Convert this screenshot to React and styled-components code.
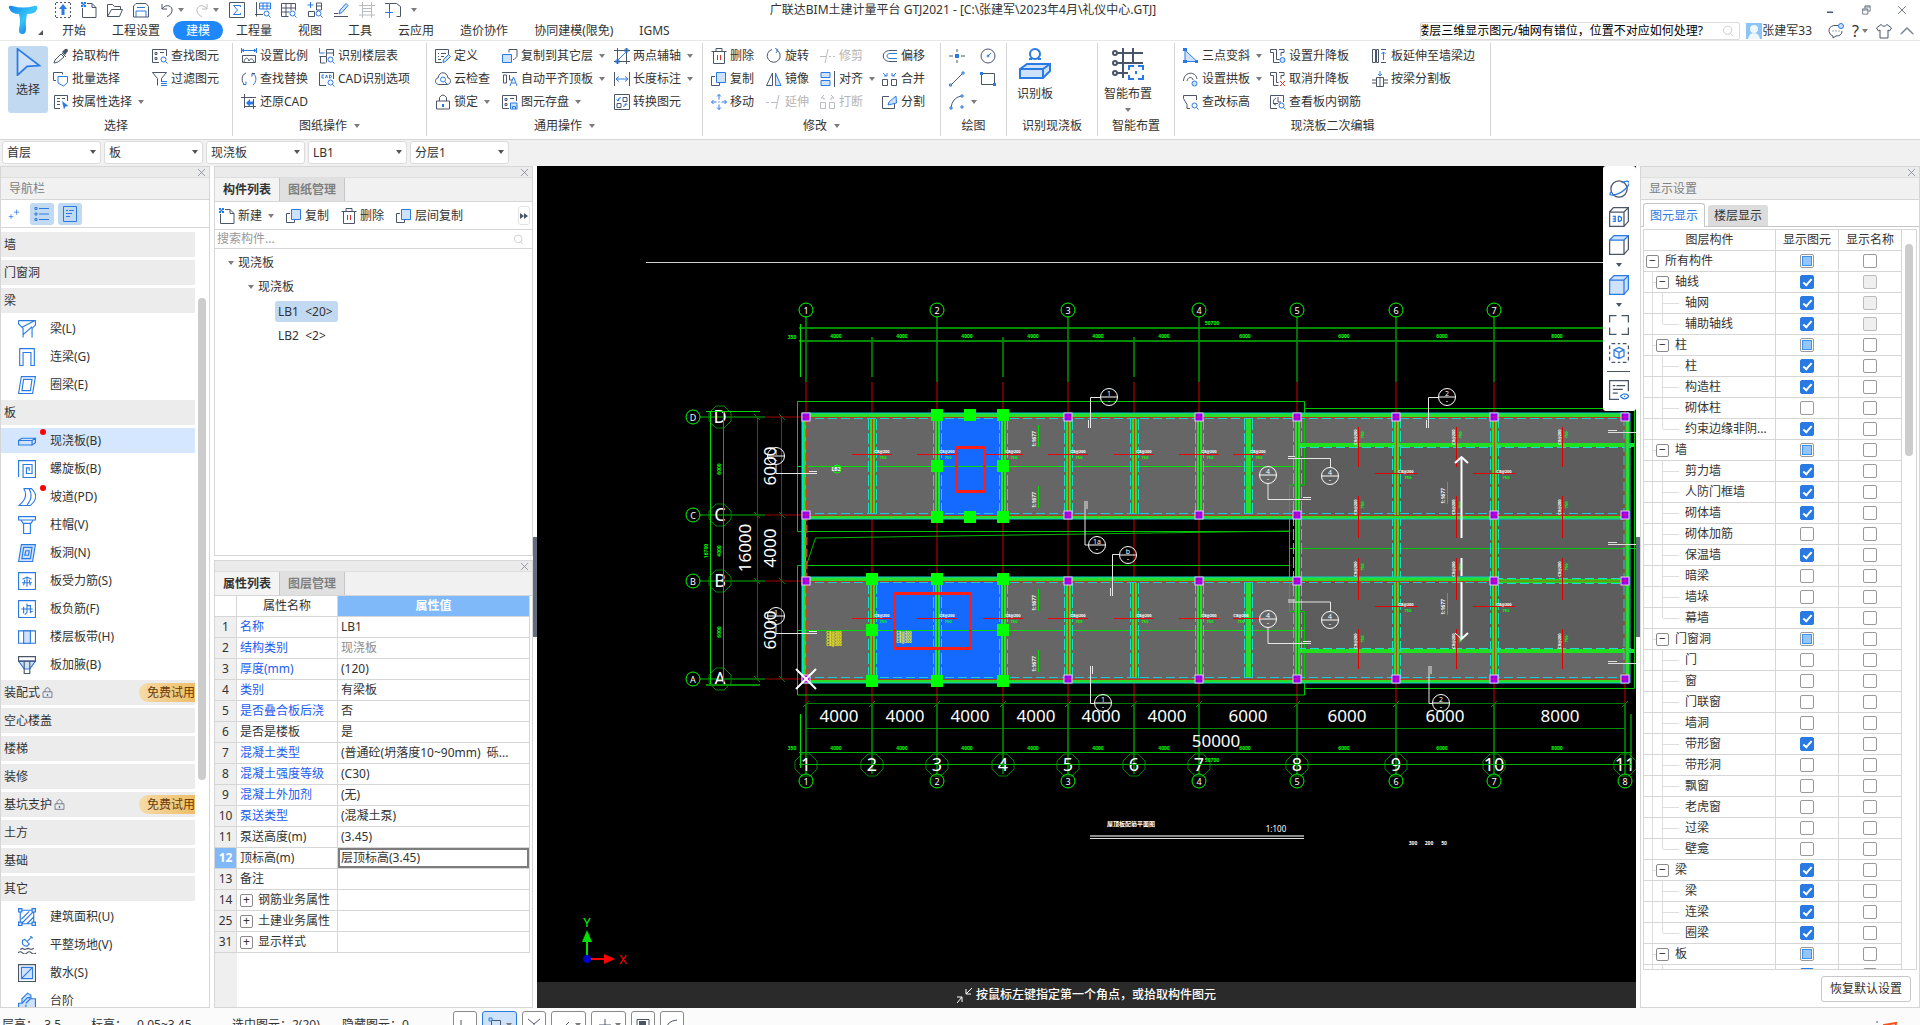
import React from "react";
import styled, { createGlobalStyle, css } from "styled-components";

const theme = {
  text: "#333",
  muted: "#808080",
  line: "#d6d6d6",
  blue: "#2a7ae4",
  pale: "#c2d9f2",
  font: `"Noto Sans", "Noto Sans CJK SC", sans-serif`,
};

const GlobalStyle = createGlobalStyle`
  *, *::before, *::after { box-sizing: border-box; }
  body {
    margin: 0;
    overflow: hidden;
    background: #fff;
    color: ${theme.text};
    font: 12px/16px ${theme.font};
  }
  button, input, select { font: inherit; color: inherit; }
  button {
    padding: 0;
    border: 0;
    background: none;
    white-space: nowrap;
  }
  svg { display: block; flex: none; }
`;

/* ---------- glyphs ---------- */

const tones = {
  k: { stroke: "#4b5568", fill: "none" },
  b: { stroke: theme.blue, fill: "none" },
  g: { stroke: "#b9bcc2", fill: "none" },
  r: { stroke: "#d22f2f", fill: "none" },
  f: { stroke: theme.blue, fill: "#cfe2fb" },
  B: { stroke: "none", fill: theme.blue },
  K: { stroke: "none", fill: "#4b5568" },
};

const LENS = "M9 11.5a2.5 2.5 0 1 0 5 0a2.5 2.5 0 1 0 -5 0M13.5 13.5l2 2";

const glyphs = {
  upload: [["k", "M1 .5h2M5 .5h2M9 .5h2M13 .5h2M1 15.5h2M5 15.5h2M9 15.5h2M13 15.5h2M.5 1v2M.5 5v2M.5 9v2M.5 13v2M15.5 1v2M15.5 5v2M15.5 9v2M15.5 13v2"], ["B", "M8 2l4 5H9.500v6h-3V7H4z"]],
  newFile: [["k", "M6 1.500h5l4 4v10H1.500V6M11 1.500v4h4"], ["B", "M0 0h2v2H0zM3 0h2v2H3zM1.500 1.500h2v2h-2zM0 3h2v2H0zM3 3h2v2H3z"]],
  open: [["k", "M.5 14.500v-12h5l2 2h6v3M.5 14.500l4-7h11l-3 7z"]],
  save: [["k", "M3 1.500h10l2.500 3v10.500h-15v-11z"], ["b", "M4 5.500h8M3 15v-6h10v6"]],
  undo: [["k", "M3 2v5h5M3 7c4-6 11-3 10 2c-.5 3-3 5-5 5.500"]],
  redo: [["g", "M13 2v5H8M13 7c-4-6-11-3-10 2c.5 3 3 5 5 5.500"]],
  sigma: [["k", "M.5 .5h15v15h-15z"], ["b", "M11.500 5V3.500h-7l4 4.500l-4 4.500h7V11"]],
  gridFind: [["k", "M1.500 0v14.500M0 12.500h8"], ["b", "M4.500 1h11v6h-11zM4.500 4h11M8 1v6M12 1v6"], ["b", LENS]],
  tableFind: [["k", "M.5 1.500h14v7M.5 1.500v13h7M.5 6h14M.5 10h8M5 1.500v13M10 1.500v7"], ["b", LENS]],
  floorFind: [["b", "M3.500 0v6M.5 3h6"], ["k", "M9.500 1h5v7h-5zM1.500 9.500h6v5h-6zM9.500 4h5"], ["b", LENS]],
  brush: [["k", "M1 11.500h4M1 14.500h14"], ["f", "M6 12l1-4l6-6.500l2 2l-6 7z"]],
  fence: [["g", "M3.500 0v16M12.500 0v16M0 3.500h16M3 6.500h9M3 9.500h9M0 13h16"]],
  crop: [["k", "M4.500 8V1.500h7l4 3v10h-4M0 1.500h4"], ["b", "M0 10.500h8M4.500 7v9"]],
  dropper: [["k", "M9 5l4 4M1 15l1-3l6-6l3 3l-6 5z"], ["K", "M9 4l3-3q3-1 3 2l-3 4z"]],
  batch: [["k", "M3 9.500H.5v-8h9v2"], ["b", "M5 5.500h9.500v6l-4 3.500l-5.500-3z"]],
  propSel: [["k", "M7 14.500H1.500v-13h13V7M4 4.500h3M4 7.500h3M4 10.500h3M9 4.500h3"], ["B", "M9 7l6.500 5l-3 .5L11 15.500z"]],
  findEl: [["k", "M7 14.500H.5v-13h14V8M3 4.500h2v2H3zM3 9.500h2v2H3zM8 4.500h4"], ["b", LENS]],
  filter: [["k", "M.5 1.500h14l-5 6v3M.5 1.500l5 6v7"], ["b", "M9 10.500h6M9 12.500h6M9 14.500h6"]],
  scale: [["b", "M.5 2.500h15M.5 0v5M15.500 0v5M3 1L1 2.500L3 4M13 1l2 1.500L13 4"], ["k", "M1.500 7.500h13v7h-13zM3 14c1-5 4-5 5-1c1-3 4-3 5 1"]],
  floorTable: [["b", "M.5 0v5h5"], ["k", "M7.500 1.500h7V8M7.500 1.500V8M7.500 5h7M.5 8.500h7v6M1.500 8v7h5"], ["b", LENS]],
  swap: [["k", "M5 2C0 4 0 11 4 14"], ["b", "M2 13.500h3v-3M11 2c5 2 5 9 1 12"], ["k", "M14 2.500h-3v3"]],
  cad: [["k", "M7 14.500H.5v-13h14V8"], ["b", "M5 4H3v3h2M6.500 7l1-3l1 3M10.500 4v3h1l1-1.500L11.500 4z"], ["b", LENS]],
  restore: [["k", "M3.500 0v14M0 3.500h15M12.500 5v10M3 12.500h12"], ["B", "M5 9l4-4v2.500h3v3H9V13z"]],
  define: [["k", "M7 14.500H.5v-13h13V7M3 5.500h1M6 5.500h5M3 8.500h1M6 8.500h3M3 11.500h3"], ["f", "M8 14.500l.5-3l5-5l2 2l-5 5z"]],
  cloud: [["k", "M4 13.500C-1 13 0 7 3 7C4 0 12 0 13 7c3 0 4 6-1 6.500z"], ["b", "M5.500 8.500a2.500 2.500 0 1 0 5 0a2.500 2.500 0 1 0-5 0M10 11l2 2"]],
  lock: [["k", "M4.500 7V3.500q3.500-5 7 0V7M1.500 7h13v8h-13z"], ["B", "M7 10h2v3H7z"]],
  copyTo: [["k", "M7 1.500h8v7l-3 3h-1M7 1.500v3"], ["f", "M.5 6.500h9v8h-9z"]],
  align2: [["k", "M0 1.500h15M1.500 4v8h3V4zM7.500 4v5h3"], ["b", "M8 15l3.500-9L15 15M9.500 12h4"]],
  elSave: [["k", "M7 14.500H.5v-13h14V7M3 4.500h2v2H3zM3 9.500h2v2H3zM8 4.500h4"], ["f", "M8.500 9h6.500v6H8.500zM10.500 15v-2.500h3V15"]],
  twoPt: [["k", "M3.500 0v16M12.500 0v16M0 2.500h16M0 13.500h16"], ["b", "M3 13L13 3M2 12h3v3H2zM11 1h3v3h-3z"]],
  length: [["k", "M.5 1v14M15.500 1v14"], ["b", "M2 8h12M5 5.500L2 8l3 2.500M11 5.500L14 8l-3 2.500"]],
  convert: [["k", "M.5 .5h15v15h-15zM9 3.500h4v4H9zM3 9.500h4v4H3z"], ["b", "M7 3.500Q4 3.500 4 7M2.500 5.500L4 7l1.500-1.500M9 12.500q3 0 3-3M10.500 11L12 9.500l1.500 1.500"]],
  trash: [["k", "M.5 3.500h15M5 3V.5h6V3M2.500 4v11.500h11V4"], ["r", "M6.500 7v5M9.500 7v5"]],
  copy: [["k", "M4 5.500H.5v9h8V12"], ["f", "M5.500 1.500h9v10h-9z"]],
  move: [["b", "M8 .5v5M8 10.500v5M.5 8h5M10.500 8h5M6 2.500l2-2l2 2M6 13.500l2 2l2-2M2.500 6l-2 2l2 2M13.500 6l2 2l-2 2"], ["K", "M7.500 7.500h1v1h-1z"]],
  rotate: [["k", "M6 1.500A6.500 6.500 0 1 0 10 1.700"], ["b", "M9 0l3 2l-2 3"]],
  mirror: [["k", "M6.500 2v12.500H.5z"], ["f", "M9.500 2v12.500h5.500z"]],
  trim: [["g", "M0 8.500h6M9 8.500h2M13 8.500h2M8 1L5 15"]],
  extend: [["g", "M0 8.500h3M5 8.500h3M13 1l-3 14M8 8.500h4"]],
  alignR: [["f", "M1 1.500h9v5H1zM1 9.500h9v5H1z"], ["k", "M14.500 0v16"]],
  breakEl: [["g", "M.5 8.500h5v6h-5zM9.500 8.500h5v6h-5zM4 6V4H1M4 1L1 4M11 6V4h3M11 1l3 3"]],
  offset: [["k", "M15 2.500H8C-1 2.500-1 13.500 8 13.500h7"], ["b", "M15 5.500H8C4 5.500 4 10.500 8 10.500h7"]],
  merge: [["k", "M.5 8.500h5v6h-5zM9.500 8.500h5v6h-5z"], ["b", "M1 2l3 3M5 2v3H2M14 2l-3 3M10 2v3h3"]],
  split: [["k", "M7 2.500H.5v12h12V10"], ["f", "M6 11l1-3l7-6l.5 7z"]],
  point: [["k", "M0 8h4M12 8h4M8 1v3M8 12v3"], ["B", "M6 6h4v4H6z"]],
  circle: [["k", "M1 8a7 7 0 1 0 14 0a7 7 0 1 0-14 0"], ["b", "M8 8l3-3M7 8a1 1 0 1 0 2 0a1 1 0 1 0-2 0"]],
  lineEl: [["k", "M2 14L14 2"], ["f", "M.5 13h2v2h-2zM13 1h2v2h-2z"]],
  rect: [["k", "M1.500 2.500h13v11h-13z"], ["B", "M0 1h3v3H0zM13 12h3v3h-3z"]],
  arc: [["k", "M2 14Q3 4 12 2"], ["f", "M1 13h2v2H1zM12 1h2v2h-2zM12 12h2v2h-2z"]],
  slope: [["f", "M2 2v11.500h12z"], ["B", "M0 0h4v3H0zM0 12h4v3H0zM12 12h3v3h-3z"]],
  arch: [["k", "M.5 10C1 0 13 0 14 8M4 10c1-5 6-4 6-1"], ["f", "M9 12.500a2.500 2.500 0 1 0 5 0a2.500 2.500 0 1 0-5 0"]],
  level: [["k", "M7 14.500H4v-4l-3.500-6v-3h13V6"], ["b", LENS]],
  drop: [["k", "M.5 1.500h6v10h3M.5 1.500v3h3v10h6M9 1.500h5v3h-3V8"], ["f", "M10 12a2.500 2.500 0 1 0 5 0a2.500 2.500 0 1 0-5 0"]],
  dropX: [["k", "M.5 1.500h6v10h2M.5 1.500v3h3v10h5M9 1.500h5v3h-3V8"], ["r", "M10 10l5 5M15 10l-5 5"]],
  rebar: [["k", "M7 14.500H.5v-13h13V8M3 9.500h5M6 4c-4 2-3 7 0 7M8 3v5h3"], ["b", LENS]],
  extendTo: [["k", "M.5 1.500h3v13h-3zM4.500 1.500h2v13h-2zM9 1.500h5M9 14.500h5"], ["b", "M11.500 12V4M9.500 6l2-2l2 2"]],
  splitBy: [["k", "M4.500 6.500h7v9h-7zM0 9h4M0 12h4M12 9h4M12 12h4M8 7v8"], ["b", "M8 0v5M6 3l2 2l2-2"]],
  chat: [["k", "M10 2.500H6q-5.500 1-5 6q1 4 4 4.500L5 15l3-2q6 0 6-5M4.500 8h1M7.500 8h1M10.500 8h1"], ["f", "M10.500 3a2 2 0 1 0 5 0a2 2 0 1 0-5 0"]],
  shirt: [["k", "M5 1.500L.5 5l2 3l1.500-1v8h8V7l1.500 1l2-3L11 1.500Q8 5 5 1.500z"]],
  search: [["g", "M2 7a5.500 5.500 0 1 0 11 0a5.500 5.500 0 1 0-11 0M11 11l3.500 4"]],
  collapse: [["k", "M1 12l7-7l7 7M1 11l7-7l7 7"]],
  close: [["k", "M3 3l10 10M13 3L3 13"]],
  closeDim: [["k", "M3 3l10 10M13 3L3 13"]],
  restoreWin: [["k", "M6.500 6V2.500h7v7H11M3.500 6.500h7v7h-7zM3.500 8h7M6.500 4h7"]],
  minimize: [["K", "M4 10h8v2H4z"]],
  sparkle: [["b", "M8 5.500h7M11.500 2v7M1 11.500h6M4 8.500v6"]],
  list: [["b", "M5 2.500h10M5 8h10M5 13.500h10M1 1.500h2v2H1zM1 7h2v2H1zM1 12.500h2v2H1z"]],
  card: [["b", "M1.500 .5h13v15h-13zM4 4.500h2M7 4.500h5M4 7.500h6M4 10.500h4"]],
  nBeam: [["b", "M.5 .5h15v4l-3 3v8M.5 .5v3l4 4v8M.5 3.500l3 3L15 .5M4.500 13l8-7"]],
  nLink: [["b", "M1.500 15.500V.5h13v15h-3V4h-7v11.500z"]],
  nRing: [["b", "M3 .5h12.500l-2.500 15H.5zM5 3h7.500L11 13H3.500z"]],
  nSlab: [["f", "M.5 7.500l3-2h12l-3 2zM.5 7.500h12v4H.5zM12.500 7.500l3-2v4l-3 2z"]],
  nSpiral: [["b", "M.5 15V.5h15v15h-11V4h8v8H7.500V7H10v2.500"]],
  nRamp: [["b", "M5 .5h7Q20 8 11 15.500H1Q10 8 5 .5M10 1q4 7-2 14"]],
  nCap: [["b", "M.5 .5h15v3h-15zM2.500 3.500l2 3h7l2-3M5 6.500v9h6v-9"]],
  nHole: [["f", "M3 .5h12.500l-2.500 15H.5z"], ["b", "M5 3h7.500L11 13H3.500zM7 6h3l-.7 4H6z"]],
  nBar: [["b", "M.5 .5h15v15H.5zM4 6.500l4-2l4 2M3.500 9.500h9M8 4v9M5 12l1-5M11 12l-1-5"]],
  nBar2: [["b", "M.5 .5h15v15H.5zM3 8h10M5 6v6M8 3v8l-2 2M8 5h3v6l2-1"]],
  nStrip: [["b", "M.5 2.500h15v11H.5z"], ["f", "M5 2.500h6v11H5z"]],
  nHaunch: [["f", "M.5 4.500h15l-5 7h-5z"], ["k", "M.5 .5h15v4H.5zM5.500 4.500v11h5v-11"]],
  nArea: [["b", "M2 2h12v12H2zM3 10l7-7M3 14L14 3M8 14l6-6"], ["f", "M.5 .5h3v3h-3zM12.500 .5h3v3h-3zM.5 12.500h3v3h-3zM12.500 12.500h3v3h-3z"]],
  nGround: [["b", "M4 4q-1 5 4 5l2-2l-4-4zM8 5l4-4M11 0l2 2"], ["k", "M0 15q2-2 4 0t4 0t4 0t4 0M2 12l2-1l2 1l3-1l3 1l2-1"]],
  nApron: [["k", "M.5 .5h15v15H.5z"], ["f", "M3 3h10v10H3zM3 13L13 3"]],
  nStep: [["f", "M.5 15v-5h3V6l5-5l3 2v3h4v9z"], ["b", "M3.500 10l5-5h3M7 10l4-4M7 15v-4"]],
  orbit: [["k", "M1.500 8a6.500 6.500 0 1 0 13 0a6.500 6.500 0 1 0-13 0"], ["b", "M2 10c-5 5 6 3 11-2S17 0 10 3"]],
  cube3d: [["k", "M.5 4l3-3.500h12v11l-3.500 4H.5zM.5 4H12v11.500M12 4l3.500-3.500"], ["b", "M3 7.500h2v4H3M3 9.500h2M7.500 7.500v4h1l1.500-1v-2l-1.500-1z"]],
  cubeTop: [["k", "M.5 4v11.500H12V4M12 15.500l3.500-4V.5"], ["f", "M.5 4L4 .5h11.500L12 4z"]],
  cube: [["f", "M.5 4L4 .5h11.500v11l-3.500 4H.5z"], ["b", "M.5 4H12v11.500M12 4L15.500 .5"]],
  fit: [["k", "M.5 6V.5H6M10 .5h5.500V6M15.500 10v5.500H10M6 15.500H.5V10"]],
  isolate: [["k", "M2 .5h3M7 .5h2M11 .5h3M2 15.500h3M7 15.500h2M11 15.500h3M.5 2v3M.5 7v2M.5 11v3M15.500 2v3M15.500 7v2M15.500 11v3"], ["b", "M8 3.500l4 2v5l-4 2l-4-2v-5zM4 5.500l4 2l4-2M8 7.500v5"]],
  listEye: [["k", "M8 15.500H.5V.5h15V9M3 4.500h2M6 4.500h7M3 7.500h8M3 10.500h4"], ["b", "M9 13q3.500-4 7 0q-3.500 4-7 0M12 13h1"]],
  bigSlab: [["f", "M.5 10.500L4 8h11.500v3.500L12 15H.5zM.5 10.500H12v4.500M12 10.500L15.500 8"], ["b", "M5.500 3a2.500 2.500 0 1 0 5 0a2.500 2.500 0 1 0-5 0M9.500 5.500h1.500M6.500 5.500H5"]],
  bigGrid: [["k", "M2 2.500h13.500M2 7.500h13.500M2 12.500h6M5.500 0v15M10.500 0v8M.5 2.500a1 1 0 1 0 2 0a1 1 0 1 0-2 0M.5 7.500a1 1 0 1 0 2 0a1 1 0 1 0-2 0M.5 12.500a1 1 0 1 0 2 0a1 1 0 1 0-2 0"], ["b", "M8.500 11V9H11M13 9h2.500v2M15.500 13.500v2H13M11 15.500H8.500v-2M12 11.500v1.500"]],
  cursor: [["f", "M2 .5l12.500 9.500l-7 .5L2 15.500z"]],
  corner: [["k", "M4 3v10h10"]],
  sRect: [["k", "M3.500 3.500h9v10h-9z"], ["f", "M1 1h3v3H1z"]],
  sX: [["k", "M2 2l6 5l6-5M8 7v8"]],
  sLine: [["k", "M3 14l9-9"]],
  sPlus: [["k", "M8 2v12M2 8h12"]],
  sFill: [["k", "M2 2.500h12v12H2z"], ["K", "M4 4h7v8H4z"]],
  sArc: [["k", "M2 14Q2 4 13 3M2 13h3v3"]],
};

const Glyph = ({ name, size = 16 }) => (
  <svg width={size} height={size} viewBox="0 0 16 16" aria-hidden="true">
    {glyphs[name].map(([tone, d], i) => (
      <path key={i} d={d} strokeWidth="1" {...tones[tone]} />
    ))}
  </svg>
);

const Caret = styled.i`
  flex: none;
  width: 0;
  height: 0;
  border: 3px solid transparent;
  border-top: 4px solid ${(p) => p.$color || "#7c7c7c"};
  border-bottom: 0;
`;

/* ---------- header ---------- */

const Page = styled.div`
  height: 100vh;
  display: flex;
  flex-direction: column;
`;

const Header = styled.header`
  display: flex;
  border-bottom: 1px solid #e8e8e8;
  height: 41px;
`;

const Logo = styled.div`
  width: 49px;
  padding: 4px 0 5px 8px;
  display: flex;
  align-items: flex-end;
`;

const HeaderRows = styled.div`
  flex: 1;
  min-width: 0;
`;

const TitleRow = styled.div`
  display: flex;
  align-items: center;
  height: 20px;
`;

const QuickTools = styled.div`
  flex: 1 1 0;
  display: flex;
  align-items: center;
  gap: 10px;
  padding-left: 6px;
`;

const IconButton = styled.button`
  display: flex;
  align-items: center;
  gap: 3px;
`;

const WindowButtons = styled.div`
  flex: 1 1 49px;
  display: flex;
  justify-content: flex-end;
  gap: 24px;
  padding-right: 12px;
`;

const TabRow = styled.nav`
  display: flex;
  align-items: center;
  height: 21px;
`;

const RibbonTab = styled.button`
  height: 19px;
  padding: 0 13px;
  border-radius: 10px;
  ${(p) =>
    p.$active &&
    css`
      background: #1e88fb;
      color: #fff;
    `}
`;

const Account = styled.div`
  margin-left: auto;
  display: flex;
  align-items: center;
  padding-right: 6px;
`;

const HelpSearch = styled.label`
  display: flex;
  align-items: center;
  width: 320px;
  height: 18px;
  padding-right: 5px;
  border: 1px solid #dcdcdc;
  border-radius: 2px;
  margin-right: 6px;
  color: #000;
  input {
    flex: 1;
    min-width: 0;
    padding: 0;
    border: 0;
    outline: 0;
    background: none;
    text-indent: -4px;
  }
`;

const AccountTools = styled.div`
  display: flex;
  align-items: center;
  gap: 8px;
  margin-left: 16px;
`;

const HelpButton = styled(IconButton)`
  font-size: 16px;
`;

/* ---------- ribbon ---------- */

const Ribbon = styled.section`
  display: flex;
  height: 99px;
  border-bottom: 1px solid ${theme.line};
`;

const Group = styled.div`
  display: flex;
  flex-direction: column;
  margin: 2px 0 3px;
  padding: 1px 0 0 ${(p) => (p.$w ? 0 : 8)}px;
  width: ${(p) => (p.$w ? `${p.$w}px` : "auto")};
  border-right: 1px solid ${theme.line};
`;

const GroupTools = styled.div`
  display: flex;
  height: 73px;
  padding-left: ${(p) => p.$lead || 0}px;
`;

const GroupLabel = styled.div`
  display: flex;
  align-items: center;
  justify-content: center;
  gap: 7px;
  margin-left: ${(p) => (p.$flush ? 0 : -8)}px;
  padding-top: 1px;
`;

const ToolColumn = styled.div`
  display: flex;
  flex-direction: column;
  width: ${(p) => p.$w}px;
`;

const Tool = styled.button`
  display: flex;
  align-items: center;
  gap: 3px;
  height: 23px;
  color: ${(p) => (p.$off ? "#b5b5b5" : "inherit")};
  ${Caret} {
    margin-left: 3px;
  }
`;

const BigTool = styled.button`
  display: flex;
  flex-direction: column;
  align-items: center;
  gap: 6px;
  width: ${(p) => p.$w || 52}px;
  height: 67px;
  margin: 2px 5px 0 0;
  padding-top: 2px;
  border-radius: 3px;
  background: ${(p) => (p.$active ? theme.pale : "none")};
`;

const ribbonGroups = [
  {
    label: "选择",
    big: { icon: "cursor", label: "选择", w: 40, size: 28, active: true },
    cols: [
      [99, ["dropper", "拾取构件"], ["batch", "批量选择"], ["propSel", "按属性选择", 1]],
      [80, ["findEl", "查找图元"], ["filter", "过滤图元"]],
    ],
  },
  {
    label: "图纸操作",
    more: true,
    cols: [
      [78, ["scale", "设置比例"], ["swap", "查找替换"], ["restore", "还原CAD"]],
      [107, ["floorTable", "识别楼层表"], ["cad", "CAD识别选项"]],
    ],
  },
  {
    label: "通用操作",
    more: true,
    cols: [
      [67, ["define", "定义"], ["cloud", "云检查"], ["lock", "锁定", 1]],
      [112, ["copyTo", "复制到其它层", 1], ["align2", "自动平齐顶板", 1], ["elSave", "图元存盘", 1]],
      [88, ["twoPt", "两点辅轴", 1], ["length", "长度标注", 1], ["convert", "转换图元"]],
    ],
  },
  {
    label: "修改",
    more: true,
    cols: [
      [55, ["trash", "删除"], ["copy", "复制"], ["move", "移动"]],
      [54, ["rotate", "旋转"], ["mirror", "镜像"], ["extend", "延伸", 0, 1]],
      [62, ["trim", "修剪", 0, 1], ["alignR", "对齐", 1], ["breakEl", "打断", 0, 1]],
      [58, ["offset", "偏移"], ["merge", "合并"], ["split", "分割"]],
    ],
  },
  {
    label: "绘图",
    cols: [
      [31, ["point", ""], ["lineEl", ""], ["arc", "", 1]],
      [26, ["circle", ""], ["rect", ""]],
    ],
  },
  { label: "识别现浇板", w: 91, lead: 2, big: { icon: "bigSlab", label: "识别板", size: 32 } },
  { label: "智能布置", w: 77, lead: 4, big: { icon: "bigGrid", label: "智能布置", size: 32, more: true } },
  {
    label: "现浇板二次编辑",
    cols: [
      [87, ["slope", "三点变斜", 1], ["arch", "设置拱板", 1], ["level", "查改标高"]],
      [102, ["drop", "设置升降板"], ["dropX", "取消升降板"], ["rebar", "查看板内钢筋"]],
      [118, ["extendTo", "板延伸至墙梁边"], ["splitBy", "按梁分割板"]],
    ],
  },
];

const RibbonGroup = ({ group }) => (
  <Group $w={group.w}>
    <GroupTools $lead={group.lead}>
      {group.big && (
        <BigTool $w={group.big.w} $active={group.big.active}>
          <Glyph name={group.big.icon} size={group.big.size} />
          <span>{group.big.label}</span>
          {group.big.more && <Caret />}
        </BigTool>
      )}
      {(group.cols || []).map(([w, ...tools], i) => (
        <ToolColumn key={i} $w={w}>
          {tools.map(([icon, label, more, off]) => (
            <Tool key={icon} $off={off} aria-label={label || icon}>
              <Glyph name={icon} />
              {label}
              {more ? <Caret /> : null}
            </Tool>
          ))}
        </ToolColumn>
      ))}
    </GroupTools>
    <GroupLabel $flush={!!group.w}>
      {group.label}
      {group.more && <Caret />}
    </GroupLabel>
  </Group>
);

/* ---------- option bar ---------- */

const OptionBar = styled.section`
  display: flex;
  gap: 3px;
  height: 26px;
  padding: 1px 0 0 2px;
  background: #f1f1f1;
`;

const PickBox = styled.label`
  position: relative;
  width: 99px;
  height: 23px;
  select {
    width: 100%;
    height: 100%;
    padding: 0 16px 0 4px;
    appearance: none;
    border: 1px solid #dcdcdc;
    border-radius: 3px;
    background: #fff;
  }
  ${Caret} {
    position: absolute;
    right: 5px;
    top: 9px;
  }
`;

/* ---------- panels ---------- */

const Workspace = styled.main`
  flex: 1;
  min-height: 0;
  display: flex;
`;

const Panel = styled.section`
  display: flex;
  flex-direction: column;
  min-height: 0;
  border: 1px solid ${theme.line};
  flex: ${(p) => p.$flex || "none"};
  overflow: hidden;
`;

const PanelStrip = styled.div`
  flex: none;
  display: flex;
  justify-content: flex-end;
  align-items: center;
  height: 11px;
  padding-right: 2px;
  background: #e7e7e7;
  border-bottom: 1px solid ${theme.line};
  opacity: 0.8;
`;

const PanelTitle = styled.h2`
  flex: none;
  margin: 0;
  height: 22px;
  padding-left: 8px;
  font: inherit;
  line-height: 22px;
  color: ${theme.muted};
  background: #f1f1f1;
  border-bottom: 1px solid ${theme.line};
`;

const NavColumn = styled.div`
  display: flex;
  width: 210px;
  margin-right: 4px;
`;

const NavTools = styled.div`
  flex: none;
  display: flex;
  align-items: center;
  gap: 4px;
  height: 28px;
  padding-left: 1px;
  border-bottom: 1px solid ${theme.line};
`;

const NavTool = styled.button`
  width: 24px;
  height: 22px;
  display: flex;
  align-items: center;
  justify-content: center;
  border-radius: 3px;
  background: ${(p) => (p.$on ? theme.pale : "none")};
`;

const NavBody = styled.div`
  flex: 1;
  min-height: 0;
  display: flex;
  overflow: hidden;
`;

const NavList = styled.ul`
  flex: 1;
  margin: 0;
  padding: 4px 0 0;
  list-style: none;
`;

const NavHead = styled.li`
  display: flex;
  align-items: center;
  gap: 2px;
  height: 25px;
  margin-bottom: 3px;
  padding-left: 3px;
  background: #ececec;
`;

const NavItem = styled.li`
  display: flex;
  align-items: center;
  gap: 14px;
  height: 25px;
  margin-bottom: 3px;
  padding-left: 17px;
  background: ${(p) => (p.$on ? "#d4e7fe" : "none")};
`;

const NavIcon = styled.span`
  position: relative;
  &::after {
    content: "";
    position: absolute;
    display: ${(p) => (p.$dot ? "block" : "none")};
    right: -10px;
    top: -3px;
    width: 6px;
    height: 6px;
    border-radius: 50%;
    background: #f00;
  }
`;

const Trial = styled.span`
  margin-left: auto;
  height: 19px;
  padding: 2px 0 0 8px;
  border-radius: 10px 0 0 10px;
  background: linear-gradient(90deg, #f6dba7, #edbe69);
  color: #6b3a06;
  line-height: 15px;
`;

const ScrollTrack = styled.div`
  flex: none;
  width: ${(p) => p.$w}px;
  padding: ${(p) => p.$top}px 3px 0;
  &::before {
    content: "";
    display: block;
    height: ${(p) => p.$len}px;
    border-radius: 4px;
    background: #ccc;
  }
`;

const MiddleColumn = styled.div`
  display: flex;
  flex-direction: column;
  gap: 4px;
  width: 319px;
`;

const PanelTabs = styled.div`
  flex: none;
  display: flex;
  height: 24px;
  background: #f1f1f1;
  border-bottom: 1px solid ${theme.line};
`;

const PanelTab = styled.button`
  width: 65px;
  font-weight: bold;
  color: ${(p) => (p.$on ? theme.text : theme.muted)};
  background: ${(p) => (p.$on ? "#f4f4f4" : "#e0e0e0")};
  border-right: 1px solid #c4c6ca;
`;

const ListTools = styled.div`
  flex: none;
  display: flex;
  align-items: center;
  gap: 12px;
  height: 28px;
  padding: 0 2px 0 4px;
  border-bottom: 1px solid ${theme.line};
`;

const ListTool = styled.button`
  display: flex;
  align-items: center;
  gap: 3px;
  ${Caret} {
    margin-left: 3px;
  }
`;

const MoreButton = styled.button`
  display: flex;
  align-items: center;
  margin-left: auto;
  height: 19px;
  padding: 0 1px;
  border: 1px solid #e2e2e2;
  border-radius: 3px;
`;

const ListSearch = styled.label`
  flex: none;
  display: flex;
  align-items: center;
  height: 19px;
  padding: 0 8px 0 2px;
  border-bottom: 1px solid ${theme.line};
  input {
    flex: 1;
    padding: 0;
    border: 0;
    outline: 0;
  }
  input::placeholder {
    color: #999;
  }
`;

const Tree = styled.ul`
  margin: 0;
  padding: 2px 0 0;
  list-style: none;
`;

const TreeRow = styled.li`
  display: flex;
  align-items: center;
  gap: 4px;
  height: 24px;
  padding-left: ${(p) => p.$indent}px;
  white-space: pre;
`;

const TreePill = styled.span`
  padding: 3px 5px 2px 3px;
  border-radius: 3px;
  background: ${(p) => (p.$on ? theme.pale : "none")};
`;

const PropBody = styled.div`
  flex: 1;
  padding-right: 2px;
  background: linear-gradient(90deg, #efefef 22px, #fff 22px);
`;

const PropTable = styled.table`
  width: 100%;
  table-layout: fixed;
  border-spacing: 0;
  background: #fff;
  th,
  td {
    height: 21px;
    padding: 0 3px;
    font-weight: normal;
    border-right: 1px solid ${theme.line};
    border-bottom: 1px solid ${theme.line};
    white-space: pre;
  }
  tbody th {
    padding: 0;
    text-align: center;
    background: #efefef;
  }
  tbody th.active {
    background: #80b9f9;
    color: #fff;
    font-weight: bold;
  }
  thead th:last-child {
    background: #80b9f9;
    color: #fff;
    font-weight: bold;
  }
  td.link {
    color: #1c5cf0;
  }
  td.dim {
    color: #8c8c8c;
  }
  td.edit {
    box-shadow: inset 0 0 0 2px #7d7d7d;
  }
`;

const Expander = styled.button`
  flex: none;
  display: inline-flex;
  align-items: center;
  justify-content: center;
  width: 13px;
  height: 13px;
  margin-right: ${(p) => (p.$wide ? 5 : 0)}px;
  border: 1px solid #8a8a8a;
  border-radius: 2px;
  line-height: 10px;
  background: #fff;
`;

const Splitter = styled.div`
  flex: none;
  display: flex;
  align-items: center;
  width: 4px;
  &::before {
    content: "";
    width: 4px;
    height: 100px;
    background: #626c7c;
  }
`;

/* ---------- canvas ---------- */

const Canvas = styled.section`
  position: relative;
  flex: 1;
  min-width: 0;
  background: #000;
  overflow: hidden;
`;

const Prompt = styled.div`
  position: absolute;
  inset: auto 0 0 0;
  height: 26px;
  display: flex;
  align-items: center;
  justify-content: center;
  gap: 4px;
  background: #2a2a2a;
  color: #fff;
  font-weight: 500;
`;

const ViewTools = styled.div`
  position: absolute;
  top: 0;
  right: 0;
  display: flex;
  flex-direction: column;
  align-items: center;
  gap: 8px;
  width: 33px;
  padding: 13px 2px 11px 0;
  background: #fff;
  border-radius: 3px;
  hr {
    width: 23px;
    margin: 0;
    border: 0;
    border-top: 1px solid #4b5568;
  }
`;

const X = [806, 872, 937, 1003, 1068, 1134, 1199, 1297, 1396, 1494, 1625];
const Y = { D: 417, C: 515, B: 581, A: 679 };
const spans = [4000, 4000, 4000, 4000, 4000, 4000, 6000, 6000, 6000, 8000];
const numbered = [0, 2, 4, 6, 7, 8, 9, 10];
const G = "#00e000";
const LIME = "#00ff00";

const L = ({ p, c = G, w = 1, dash }) => (
  <polyline points={p} fill="none" stroke={c} strokeWidth={w} strokeDasharray={dash} />
);

const T = ({ x, y, s = 5, c = LIME, r = 0, children, ...rest }) => (
  <text
    x={x}
    y={y}
    fontSize={s}
    fill={c}
    fontWeight={s < 7 ? "bold" : "normal"}
    textAnchor="middle"
    dominantBaseline="central"
    transform={r ? `rotate(${r} ${x} ${y})` : undefined}
    fontFamily={theme.font}
    {...rest}
  >
    {children}
  </text>
);

const Bubble = ({ x, y, n }) => (
  <g>
    <circle cx={x} cy={y} r="7" fill="none" stroke={LIME} />
    <T x={x} y={y} s={9} c="#fff">{n}</T>
  </g>
);

const BigBubble = ({ x, y, n }) => (
  <g>
    <path
      d={`M${x - 4} ${y - 11}h8l7 7v8l-7 7h-8l-7-7v-8z`}
      fill="none"
      stroke="#008000"
    />
    <T x={x} y={y - 1} s={18} c="#fff">{n}</T>
  </g>
);

/* outer beam: band lies off the axis on one side */
const EdgeBeam = ({ x1, x2, y, side }) => (
  <g>
    <L p={`${x1},${y + side * 2} ${x2},${y + side * 2}`} c="#2bdd2b" w={4} />
    <L p={`${x1},${y + side * 4} ${x2},${y + side * 4}`} c="#00d0d0" />
    <L p={`${x1},${y + 0.5} ${x2},${y + 0.5}`} c="#b0401c" />
    <L p={`${x1},${y - side * 1.5} ${x2},${y - side * 1.5}`} c="#20c8d8" dash="9 4" />
  </g>
);

const HBeam = ({ x1, x2, y, side, both }) => (
  <g>
    <L p={`${x1},${y} ${x2},${y}`} c="#1fe01f" w={4} />
    <L p={`${x1},${y + side * 2.5} ${x2},${y + side * 2.5}`} c="#20d8d8" dash="9 4" />
    {both && <L p={`${x1},${y - side * 2.5} ${x2},${y - side * 2.5}`} c="#20d8d8" dash="9 4" />}
    {both && <L p={`${x1},${y} ${x2},${y}`} c="#a85a10" />}
  </g>
);

const VBeam = ({ x, y1, y2, axis = true }) => (
  <g>
    <L p={`${x + 0.5},${y1} ${x + 0.5},${y2}`} c="#2bdd2b" w={5} />
    {axis && <L p={`${x + 0.5},${y1} ${x + 0.5},${y2}`} c="#b84a10" />}
    <L p={`${x - 3.5},${y1} ${x - 3.5},${y2}`} c="#20d8d8" dash="11 3" />
    <L p={`${x + 4.5},${y1} ${x + 4.5},${y2}`} c="#20d8d8" dash="11 3" />
  </g>
);

const Mark = ({ x, y, n, p, tail }) => (
  <g>
    <circle cx={x} cy={y} r="8.500" fill="none" stroke="#fff" />
    <L p={`${x - 8},${y} ${x + 8},${y}`} c="#fff" />
    <T x={x} y={y - 4} s={7} c="#fff">{n}</T>
    <T x={x} y={y + 4} s={6} c="#fff">-</T>
    <L p={p} c="#e6e6e6" />
    {tail && <L p={tail} c="#e6e6e6" />}
  </g>
);

const Column = ({ x, y }) => (
  <g>
    <rect x={x - 4} y={y - 4} width="8" height="8" fill="#8a00ff" stroke="#f0c8f0" />
    <L p={`${x - 3},${y} ${x + 3},${y}`} c="#e000a0" />
    <L p={`${x},${y - 3} ${x},${y + 3}`} c="#e000a0" />
  </g>
);

const columns = [
  ...[0, 4, 6, 7, 8, 9, 10].map((i) => [X[i], Y.D]),
  ...[0, 4, 6, 7, 9, 10].map((i) => [X[i], Y.C]),
  ...[0, 4, 6, 7, 9, 10].map((i) => [X[i], Y.B]),
  ...[0, 4, 6, 7, 8, 9, 10].map((i) => [X[i], Y.A]),
];

const grips = [
  [937, 415], [970, 415], [1003, 415], [937, 466], [1003, 466], [937, 517], [970, 517], [1003, 517],
  [872, 579], [937, 579], [1003, 579], [872, 630], [1003, 630], [872, 681], [937, 681], [1003, 681],
];

const Plan = () => (
  <svg width="100%" height="100%" viewBox="537 166 1099 842" preserveAspectRatio="xMinYMin slice">
    <L p="646,262.500 1636,262.500" c="#d0d0d0" />

    {/* slabs */}
    <rect x="802" y="413" width="495" height="106" fill="#666" />
    <rect x="802" y="577" width="495" height="106" fill="#666" />
    <rect x="1297" y="413" width="331" height="270" fill="#5d5d5d" />
    <rect x="1297" y="413" width="331" height="32" fill="#676767" />
    <rect x="1297" y="650" width="331" height="32" fill="#676767" />
    <rect x="937" y="417" width="66" height="98" fill="#146aff" />
    <rect x="872" y="581" width="131" height="98" fill="#146aff" />

    {/* axes */}
    {X.map((x, i) => (
      <g key={x}>
        <L p={`${x},382 ${x},413`} c="#d00000" />
        {i < 7 && <L p={`${x},519 ${x},577`} c="#d00000" />}
        <L p={`${x},683 ${x},704`} c="#d00000" />
        <L p={`${x},704 ${x},774`} />
        <BigBubble x={x} y={765} n={i + 1} />
        {numbered.includes(i) ? (
          <L p={`${x},317 ${x},382`} />
        ) : (
          <L p={`${x},337 ${x},377`} />
        )}
        <L p={`${x - 3},707 ${x + 3},701`} c="#008000" />
      </g>
    ))}
    {numbered.map((i, k) => (
      <g key={i}>
        <Bubble x={X[i]} y={310} n={k + 1} />
        <Bubble x={X[i]} y={781} n={k + 1} />
      </g>
    ))}
    <L p="799,328 1636,328" c="#008c00" w={2} />
    <L p="799,341 1636,341" c="#008c00" w={2} />
    <L p="800.500,324 800.500,377" />
    <L p="800.500,714 800.500,768" />
    <L p="1631,714 1631,768" />
    <L p="806,703.500 1625,703.500" c="#007800" />
    <L p="806,728.500 1625,728.500" c="#008c00" />
    <L p="799,752.500 1632,752.500" c="#00b400" />
    <L p="799,764.500 1632,764.500" c="#00b400" />
    <T x={792} y={337}>350</T>
    <T x={792} y={748}>350</T>
    <T x={1212} y={323}>50700</T>
    <T x={1212} y={760}>50700</T>
    {spans.map((n, i) => {
      const mid = Math.round((X[i] + X[i + 1]) / 2);
      return (
        <g key={i}>
          <T x={mid - 3} y={336}>{n}</T>
          <T x={mid - 3} y={748}>{n}</T>
          <T x={mid} y={715} s={17} c="#fff">{n}</T>
        </g>
      );
    })}
    <T x={1216} y={740} s={17} c="#fff">50000</T>

    {Object.entries(Y).map(([n, y]) => (
      <g key={n}>
        <L p={`700,${y} 765,${y}`} c="#00b400" />
        <L p={`765,${y} 802,${y}`} c="#a00000" />
        <L p={`754,${y - 3} 760,${y + 3}`} c="#008000" />
        <L p={`779,${y - 3} 785,${y + 3}`} c="#008000" />
        <Bubble x={693} y={y} n={n} />
        <BigBubble x={720} y={y} n={n} />
      </g>
    ))}
    <L p="710.500,411 710.500,685" />
    <L p="723.500,411 723.500,685" c="#00b400" />
    <L p="757.500,417 757.500,679" c="#006e00" />
    <L p="781.500,417 781.500,679" c="#006e00" />
    <L p="706,411.500 760,411.500" />
    <L p="706,685 760,685" c="#008c00" w={2} />
    <T x={719} y={469} r={-90}>6000</T>
    <T x={719} y={551} r={-90}>4000</T>
    <T x={719} y={632} r={-90}>6000</T>
    <T x={706} y={551} r={-90}>16700</T>
    <T x={769} y={466} s={17} c="#fff" r={-90}>6000</T>
    <T x={769} y={548} s={17} c="#fff" r={-90}>4000</T>
    <T x={769} y={630} s={17} c="#fff" r={-90}>6000</T>
    <T x={744} y={548} s={17} c="#fff" r={-90}>16000</T>

    {/* building outline */}
    <L p="1304.500,485 1304.500,401.500 797.500,401.500 797.500,531.500 1289.500,531.500" c="#00c800" />
    <L p="1304.500,485 1289.500,485 1289.500,611.500 1304.500,611.500 1304.500,695 797.500,695 797.500,565.500 1289.500,565.500" c="#00c800" />
    <L p="1304.500,408.500 1634.500,408.500 1634.500,688.500 1304.500,688.500" c="#00c800" />
    <L p="1289.500,548.500 1636,548.500" c="#00c800" />
    <L p="797,466.500 1297,466.500" />
    <L p="797,630.500 1304,630.500" />
    <L p="806.500,565 815.500,538 1289,531" c="#00b400" />

    {/* beams */}
    <HBeam x1={1297} x2={1634} y={445} side={1} />
    <HBeam x1={1297} x2={1634} y={651} side={-1} />
    {[1, 2, 3, 4, 5, 6].map((i) => (
      <g key={i}>
        <VBeam x={X[i]} y1={419} y2={514} />
        <VBeam x={X[i]} y1={583} y2={678} />
      </g>
    ))}
    <VBeam x={1248} y1={419} y2={514} axis={false} />
    <VBeam x={1248} y1={583} y2={678} axis={false} />
    {[7, 8, 9].map((i) => (
      <VBeam key={i} x={X[i]} y1={417} y2={679} />
    ))}
    <EdgeBeam x1={802} x2={1629} y={Y.D} side={-1} />
    <EdgeBeam x1={802} x2={1625} y={Y.C} side={1} />
    <EdgeBeam x1={802} x2={1494} y={Y.B} side={-1} />
    <HBeam x1={1494} x2={1625} y={Y.B} side={1} both />
    <EdgeBeam x1={802} x2={1629} y={Y.A} side={1} />
    <L p="804.500,413 804.500,683" c="#2bdd2b" w={3} />
    <L p="802.500,413 802.500,683" c="#00e0d0" w={2} />
    <L p="806.500,417 806.500,679" c="#d04020" dash="8 4" w={2} />
    <L p="1627.500,413 1627.500,683" c="#2bdd2b" w={4} />
    <L p="1630,413 1630,683" c="#00c8c8" />
    <L p="1625,417 1625,679" c="#a85a10" />
    <L p="1624,417 1624,679" c="#20c8d8" dash="9 4" />

    {/* rebar notes */}
    {[X[1], X[2], X[3], X[4], X[5], X[6], 1248].map((x, i) => {
      const half = i === 6 ? 15 : 20;
      return [454, 618].map((y) => (
        <g key={`${x}-${y}`}>
          <L p={`${x - half},${y + 0.5} ${x + half},${y + 0.5}`} c="#f00000" />
          <T x={i === 6 && y === 618 ? x - 7 : x + 10} y={y - 3} s={4} c="#fff">C8@200</T>
          <T x={i === 6 && y === 618 ? x - 7 : x + 11} y={y + 3} s={4}>750</T>
        </g>
      ));
    })}
    {[1358, 1456, 1562].map((x) =>
      [[427, 467, 437], [496, 538, 507], [558, 600, 569], [629, 669, 641]].map(([a, b, t]) => (
        <g key={`${x}-${a}`}>
          <L p={`${x + 0.5},${a} ${x + 0.5},${b}`} c="#e00000" />
          <T x={x - 3} y={t} s={4} c="#fff" r={-90}>C8@200</T>
          <T x={x + 4} y={t - 2} s={4} r={-90}>750</T>
        </g>
      ))
    )}
    {[X[8], X[9]].map((x) =>
      [473, 606].map((y) => (
        <g key={`${x}-${y}`}>
          <L p={`${x - 21},${y + 0.5} ${x + 21},${y + 0.5}`} c="#e00000" />
          <T x={x + 10} y={y - 2} s={4} c="#fff">C8@200</T>
          <T x={x + 12} y={y + 4} s={4}>750</T>
        </g>
      ))
    )}
    {[[1038, 425], [1038, 486], [1038, 589], [1038, 650], [1447, 482], [1447, 593]].map(([x, y]) => (
      <g key={`${x}-${y}`}>
        <L p={`${x + 0.5},${y} ${x + 0.5},${y + 22}`} />
        <T x={x - 4} y={y + 14} c="#fff" r={-90}>1:1677</T>
      </g>
    ))}
    <L p="1461.500,538 1461.500,457" c="#fff" w={2} />
    <L p="1455,463 1461.500,457 1468,463" c="#fff" w={2} />
    <L p="1461.500,558 1461.500,576" c="#fff" w={2} />
    <L p="1461.500,582 1461.500,639 1468,633" c="#fff" w={2} />
    <L p="1461.500,639 1455,633" c="#fff" />

    {columns.map(([x, y]) => (
      <Column key={`${x}-${y}`} x={x} y={y} />
    ))}

    {/* section marks */}
    <Mark x={1109} y={397} n="1" p="1101,397.500 1090.500,397.500 1090.500,428" tail="1088.500,420 1088.500,428" />
    <Mark x={1447} y={397} n="2" p="1439,397.500 1428.500,397.500 1428.500,428" tail="1426.500,420 1426.500,428" />
    <Mark x={1097} y={545} n="1a" p="1089,545 1085,545 1085,501" tail="1087,501 1087,509" />
    <Mark x={1128} y={555} n="b" p="1120,554.500 1112.500,554.500 1112.500,596" tail="1110.500,588 1110.500,596" />
    <Mark x={776} y={456} n="1" p="776,465 776,473.500 817,473.500" tail="809,471.500 817,471.500" />
    <Mark x={776} y={616} n="1" p="776,625 776,633.500 817,633.500" tail="809,631.500 817,631.500" />
    <Mark x={1268} y={475} n="4" p="1268,484 1268,499.500 1311,499.500" tail="1303,497.500 1311,497.500" />
    <Mark x={1330} y={476} n="4" p="1330.500,467 1330.500,458.500 1288,458.500" tail="1288,456.500 1295,456.500" />
    <Mark x={1268} y={619} n="4" p="1268,628 1268,643.500 1311,643.500" tail="1303,641.500 1311,641.500" />
    <Mark x={1330} y={620} n="4" p="1330.500,611 1330.500,602 1288,602" tail="1288,600 1295,600" />
    <Mark x={1103} y={703} n="1" p="1095,703.500 1090.500,703.500 1090.500,666" tail="1092.500,666 1092.500,674" />
    <Mark x={1441} y={703} n="2" p="1433,703.500 1429,703.500 1429,666" tail="1431,666 1431,674" />
    {[432, 544, 663].map((y) => (
      <g key={y}>
        <L p={`1608,${y + 0.5} 1636,${y + 0.5}`} c="#ddd" />
        <L p={`1608,${y - 1.5} 1617,${y - 1.5}`} c="#ddd" />
      </g>
    ))}
    <circle cx="837" cy="469" r="4" fill="none" stroke={LIME} />
    <T x={836} y={469} c="#fff">LB2</T>

    {/* yellow slab notes */}
    {[[834, 5], [904, 4]].map(([x, n]) =>
      Array.from({ length: n }, (_, i) => (
        <T key={`${x}-${i}`} x={x} y={632 + i * 3} s={4} c="#ff0">
          C8@200
        </T>
      ))
    )}

    {/* selection grips and highlight boxes */}
    {grips.map(([x, y]) => (
      <rect key={`${x}-${y}`} x={x - 6} y={y - 6} width="12" height="12" fill={LIME} />
    ))}
    <rect x="956.500" y="447.500" width="28" height="44" rx="1" fill="none" stroke="#ff1e14" strokeWidth="3" />
    <rect x="894.500" y="593.500" width="76" height="55" rx="1" fill="none" stroke="#ff1e14" strokeWidth="3" />
    <L p="796,669 816,689" c="#fff" w={2} />
    <L p="816,669 796,689" c="#fff" w={2} />

    {/* drawing title */}
    <T x={1131} y={824} s={6} c="#fff">屋顶板配筋平面图</T>
    <L p="1090,836 1304,836" c="#8c8c8c" w={2} />
    <L p="1090,838.500 1304,838.500" c="#ddd" />
    <T x={1276} y={828} s={8} c="#fff">1:100</T>
    <T x={1413} y={843} c="#fff">300</T>
    <T x={1429} y={843} c="#fff">200</T>
    <T x={1444} y={843} c="#fff">50</T>

    {/* coordinate axes */}
    <L p="587,958 587,938" w={2} />
    <path d="M582 942l5-12l5 12z" fill="#00e000" />
    <L p="587,959 605,959" c="#f00" w={2} />
    <path d="M604 954l11 5l-11 5z" fill="#f00" />
    <circle cx="587" cy="959" r="4" fill="#0000c8" />
    <T x={587} y={922} s={13}>Y</T>
    <T x={623} y={959} s={13} c="#f00">X</T>
  </svg>
);

/* ---------- display settings ---------- */

const DisplayTabs = styled.div`
  flex: none;
  display: flex;
  align-items: flex-end;
  gap: 3px;
  height: 27px;
  padding-left: 2px;
  border-bottom: 1px solid #c4c6ca;
`;

const DisplayTab = styled.button`
  padding: 0 6px;
  height: ${(p) => (p.$on ? 24 : 21)}px;
  border-radius: 3px 3px 0 0;
  background: #dcdcdc;
  ${(p) =>
    p.$on &&
    css`
      margin-bottom: -1px;
      background: #fff;
      color: ${theme.blue};
      border: 1px solid #c4c6ca;
      border-bottom: 0;
    `}
`;

const DisplayBody = styled.div`
  flex: 1;
  min-height: 0;
  display: flex;
  margin: 2px 2px 0;
  border: 1px solid ${theme.line};
  overflow: hidden;
`;

const DisplayTable = styled.table`
  flex: 1;
  align-self: flex-start;
  table-layout: fixed;
  border-spacing: 0;
  th,
  td {
    height: 21px;
    padding: 0;
    font-weight: normal;
    text-align: center;
    border-right: 1px solid ${theme.line};
    border-bottom: 1px solid ${theme.line};
  }
`;

const NodeCell = styled.div`
  display: flex;
  align-items: center;
  height: 20px;
  padding-left: ${(p) => (p.$level ? 8 : 2)}px;
  white-space: nowrap;
`;

const Rail = styled.span`
  width: 1px;
  height: ${(p) => (p.$half ? 10 : 20)}px;
  align-self: flex-start;
  margin-right: ${(p) => p.$gap || 0}px;
  background: #dedede;
`;

const Dash = styled.span`
  width: ${(p) => p.$w}px;
  height: 1px;
  background: #dedede;
`;

const NodeLabel = styled.span`
  padding-left: 6px;
`;

const Check = styled.input`
  appearance: none;
  display: block;
  width: 14px;
  height: 14px;
  margin: 0 auto;
  padding: 2px;
  border: 1px solid #999;
  border-radius: 2px;
  background: #fff;
  &:disabled {
    background: #efefef;
    border-color: #bbb;
  }
  &:indeterminate::before {
    content: "";
    display: block;
    width: 10px;
    height: 10px;
    margin: -1px;
    outline: 0;
    background: #94c6fd;
    border: 1px solid #3a92f0;
  }
  &:checked:not(:indeterminate) {
    background: ${theme.blue};
    border-color: ${theme.blue};
  }
  &:checked:not(:indeterminate)::before {
    content: "";
    display: block;
    width: 9px;
    height: 5px;
    margin-top: 1px;
    border: solid #fff;
    border-width: 0 0 2px 2px;
    transform: rotate(-48deg);
  }
`;

const DisplayFoot = styled.div`
  flex: none;
  display: flex;
  justify-content: flex-end;
  padding: 6px 8px 5px;
`;

const ResetButton = styled.button`
  height: 26px;
  padding: 0 8px;
  border: 1px solid #c8c8c8;
  border-radius: 3px;
`;

const RightColumn = styled.div`
  display: flex;
  width: 280px;
  & > ${Panel} {
    flex: 1;
  }
`;

// [level, label, state, nameLocked]: state 2 is mixed
const nodes = [
  [0, "所有构件", 2],
  [1, "轴线", 1, 1], [2, "轴网", 1, 1], [2, "辅助轴线", 1, 1],
  [1, "柱", 2], [2, "柱", 1], [2, "构造柱", 1], [2, "砌体柱", 0], [2, "约束边缘非阴...", 1],
  [1, "墙", 2], [2, "剪力墙", 1], [2, "人防门框墙", 1], [2, "砌体墙", 1], [2, "砌体加筋", 0],
  [2, "保温墙", 1], [2, "暗梁", 0], [2, "墙垛", 0], [2, "幕墙", 1],
  [1, "门窗洞", 2], [2, "门", 0], [2, "窗", 0], [2, "门联窗", 0], [2, "墙洞", 0],
  [2, "带形窗", 1], [2, "带形洞", 0], [2, "飘窗", 0], [2, "老虎窗", 0], [2, "过梁", 0], [2, "壁龛", 0],
  [1, "梁", 1], [2, "梁", 1], [2, "连梁", 1], [2, "圈梁", 1],
  [1, "板", 2], [2, "", 1],
];

const markMixed = (el) => {
  if (el) el.indeterminate = true;
};

const NodeRow = ({ node: [level, label, state, locked], last }) => (
  <tr>
    <td>
      <NodeCell $level={level}>
        {level === 1 && (
          <>
            <Rail />
            <Dash $w={3} />
          </>
        )}
        {level === 2 && (
          <>
            <Rail $gap={9} />
            <Rail $half={last} />
            <Dash $w={16} />
          </>
        )}
        {level < 2 && <Expander aria-label={`收起${label}`}>−</Expander>}
        <NodeLabel>{label}</NodeLabel>
      </NodeCell>
    </td>
    <td>
      <Check type="checkbox" aria-label={`${label} 显示图元`} defaultChecked={state === 1} ref={state === 2 ? markMixed : undefined} />
    </td>
    <td>
      <Check type="checkbox" aria-label={`${label} 显示名称`} disabled={!!locked} />
    </td>
  </tr>
);

/* ---------- status bar ---------- */

const StatusBar = styled.footer`
  height: 17px;
  overflow: hidden;
  background: #fbfbfb;
`;

const StatusRow = styled.div`
  display: flex;
  align-items: center;
  height: 27px;
  margin-top: 3px;
  padding-left: 2px;
`;

const StatusText = styled.span`
  width: ${(p) => p.$w}px;
  white-space: pre;
`;

const StatusButton = styled.button`
  display: flex;
  align-items: center;
  justify-content: center;
  gap: 2px;
  width: ${(p) => (p.$wide ? 35 : 24)}px;
  height: 27px;
  margin-right: 5px;
  border: 1px solid ${(p) => (p.$on ? theme.blue : "#8a8a8a")};
  border-radius: 3px;
  background: ${(p) => (p.$on ? "#cfe2fb" : "#fff")};
`;

const StatusLogo = styled.div`
  margin-left: auto;
  padding: 8px 22px 0 0;
`;

/* ---------- data ---------- */

const navRows = [
  ["墙"], ["门窗洞"], ["梁"],
  ["梁(L)", "nBeam"], ["连梁(G)", "nLink"], ["圈梁(E)", "nRing"],
  ["板"],
  ["现浇板(B)", "nSlab", 1, 1], ["螺旋板(B)", "nSpiral"], ["坡道(PD)", "nRamp", 1], ["柱帽(V)", "nCap"],
  ["板洞(N)", "nHole"], ["板受力筋(S)", "nBar"], ["板负筋(F)", "nBar2"], ["楼层板带(H)", "nStrip"], ["板加腋(B)", "nHaunch"],
  ["装配式", null, 1], ["空心楼盖"], ["楼梯"], ["装修"], ["基坑支护", null, 1], ["土方"], ["基础"], ["其它"],
  ["建筑面积(U)", "nArea"], ["平整场地(V)", "nGround"], ["散水(S)", "nApron"], ["台阶", "nStep"],
];

const props = [
  [1, "名称", "LB1", "link"],
  [2, "结构类别", "现浇板", "link", "dim"],
  [3, "厚度(mm)", "(120)", "link"],
  [4, "类别", "有梁板", "link"],
  [5, "是否叠合板后浇", "否", "link"],
  [6, "是否是楼板", "是"],
  [7, "混凝土类型", "(普通砼(坍落度10~90mm)  砾...", "link"],
  [8, "混凝土强度等级", "(C30)", "link"],
  [9, "混凝土外加剂", "(无)", "link"],
  [10, "泵送类型", "(混凝土泵)", "link"],
  [11, "泵送高度(m)", "(3.45)"],
  [12, "顶标高(m)", "层顶标高(3.45)", "", "edit"],
  [13, "备注", ""],
  [14, "钢筋业务属性", "", "group"],
  [25, "土建业务属性", "", "group"],
  [31, "显示样式", "", "group"],
];

const quickTools = [
  ["upload"], ["newFile"], ["open"], ["save"], ["undo", 1], ["redo", 1], ["sigma"],
  ["gridFind"], ["tableFind"], ["floorFind"], ["brush"], ["fence"], ["crop"],
];

const ribbonTabs = ["开始", "工程设置", "建模", "工程量", "视图", "工具", "云应用", "造价协作", "协同建模(限免)", "IGMS"];

const picks = [["楼层", "首层"], ["类别", "板"], ["构件类型", "现浇板"], ["构件", "LB1"], ["分层", "分层1"]];

const CloseStrip = () => (
  <PanelStrip>
    <IconButton aria-label="关闭">
      <Glyph name="closeDim" size={11} />
    </IconButton>
  </PanelStrip>
);

const App = () => (
  <Page>
    <GlobalStyle />
    <Header>
      <Logo>
        <svg width="30" height="30" viewBox="0 0 30 30">
          <defs>
            <linearGradient id="brand" x1="0" y1="0" x2="1" y2="1">
              <stop offset="0" stopColor="#1583e8" />
              <stop offset="0.500" stopColor="#35c5fa" />
              <stop offset="1" stopColor="#0b5fd8" />
            </linearGradient>
          </defs>
          <path d="M1 3Q0 0 4 1Q15 4 26 1Q30 0 29 4Q28 9 19 9Q17 16 18 24Q18 29 14.500 29Q10 29 11 24Q13 16 11 9Q3 9 1 3z" fill="url(#brand)" />
        </svg>
        <svg width="5" height="5" viewBox="0 0 5 5">
          <path d="M5 0v5H0z" fill="#555" />
        </svg>
      </Logo>
      <HeaderRows>
        <TitleRow>
          <QuickTools>
            {quickTools.map(([icon, more]) => (
              <IconButton key={icon} aria-label={icon}>
                <Glyph name={icon} />
                {more && <Caret />}
              </IconButton>
            ))}
            <IconButton aria-label="更多">
              <Caret />
            </IconButton>
          </QuickTools>
          <span>广联达BIM土建计量平台 GTJ2021 - [C:\张建军\2023年4月\礼仪中心.GTJ]</span>
          <WindowButtons>
            <IconButton aria-label="最小化"><Glyph name="minimize" size={12} /></IconButton>
            <IconButton aria-label="还原"><Glyph name="restoreWin" size={12} /></IconButton>
            <IconButton aria-label="关闭窗口"><Glyph name="close" size={12} /></IconButton>
          </WindowButtons>
        </TitleRow>
        <TabRow>
          {ribbonTabs.map((t) => (
            <RibbonTab key={t} $active={t === "建模"}>{t}</RibbonTab>
          ))}
          <Account>
            <HelpSearch>
              <input aria-label="帮助搜索" defaultValue="楼层三维显示图元/轴网有错位，位置不对应如何处理?" />
              <Glyph name="search" size={12} />
            </HelpSearch>
            <svg width="16" height="16" viewBox="0 0 16 16">
              <rect width="16" height="16" fill="#8cc4f8" />
              <circle cx="8" cy="6" r="4" fill="#eef6fe" />
              <path d="M2 16q1-6 6-6t6 6z" fill="#eef6fe" />
            </svg>
            <span>张建军33</span>
            <AccountTools>
              <IconButton aria-label="消息"><Glyph name="chat" /></IconButton>
              <HelpButton aria-label="帮助">?<Caret /></HelpButton>
              <IconButton aria-label="皮肤"><Glyph name="shirt" /></IconButton>
              <IconButton aria-label="收起功能区"><Glyph name="collapse" size={14} /></IconButton>
            </AccountTools>
          </Account>
        </TabRow>
      </HeaderRows>
    </Header>

    <Ribbon>
      {ribbonGroups.map((g) => (
        <RibbonGroup key={g.label} group={g} />
      ))}
    </Ribbon>

    <OptionBar>
      {picks.map(([name, value]) => (
        <PickBox key={name}>
          <select aria-label={name}>
            <option>{value}</option>
          </select>
          <Caret $color="#555" />
        </PickBox>
      ))}
    </OptionBar>

    <Workspace>
      <NavColumn>
        <Panel $flex="1">
          <CloseStrip />
          <PanelTitle>导航栏</PanelTitle>
          <NavTools>
            <NavTool aria-label="添加"><Glyph name="sparkle" size={12} /></NavTool>
            <NavTool $on aria-label="列表"><Glyph name="list" /></NavTool>
            <NavTool $on aria-label="卡片"><Glyph name="card" /></NavTool>
          </NavTools>
          <NavBody>
            <NavList>
              {navRows.map(([label, icon, flag, on]) =>
                icon ? (
                  <NavItem key={label} $on={on}>
                    <NavIcon $dot={flag}><Glyph name={icon} size={18} /></NavIcon>
                    {label}
                  </NavItem>
                ) : (
                  <NavHead key={label}>
                    {label}
                    {flag && (
                      <>
                        <Glyph name="lock" size={11} />
                        <Trial>免费试用</Trial>
                      </>
                    )}
                  </NavHead>
                )
              )}
            </NavList>
            <ScrollTrack $w={14} $top={70} $len={482} />
          </NavBody>
        </Panel>
      </NavColumn>

      <MiddleColumn>
        <Panel $flex="0 0 390px">
          <CloseStrip />
          <PanelTabs>
            <PanelTab $on>构件列表</PanelTab>
            <PanelTab>图纸管理</PanelTab>
          </PanelTabs>
          <ListTools>
            <ListTool><Glyph name="newFile" />新建<Caret /></ListTool>
            <ListTool><Glyph name="copy" />复制</ListTool>
            <ListTool><Glyph name="trash" />删除</ListTool>
            <ListTool><Glyph name="copy" />层间复制</ListTool>
            <MoreButton aria-label="更多">
              <svg width="8" height="6" viewBox="0 0 8 6"><path d="M0 0l4 3l-4 3zM4 0l4 3l-4 3z" fill="#4b5568" /></svg>
            </MoreButton>
          </ListTools>
          <ListSearch>
            <input aria-label="搜索构件" placeholder="搜索构件..." />
            <Glyph name="search" size={11} />
          </ListSearch>
          <Tree>
            <TreeRow $indent={13}><Caret />现浇板</TreeRow>
            <TreeRow $indent={33}><Caret />现浇板</TreeRow>
            <TreeRow $indent={60}><TreePill $on>{"LB1  <20>"}</TreePill></TreeRow>
            <TreeRow $indent={60}><TreePill>{"LB2  <2>"}</TreePill></TreeRow>
          </Tree>
        </Panel>

        <Panel $flex="1">
          <CloseStrip />
          <PanelTabs>
            <PanelTab $on>属性列表</PanelTab>
            <PanelTab>图层管理</PanelTab>
          </PanelTabs>
          <PropBody>
            <PropTable>
              <colgroup>
                <col width="22" />
                <col width="101" />
                <col />
              </colgroup>
              <thead>
                <tr>
                  <th aria-label="序号" />
                  <th>属性名称</th>
                  <th>属性值</th>
                </tr>
              </thead>
              <tbody>
                {props.map(([n, name, value, kind, cell]) => (
                  <tr key={n}>
                    <th className={cell === "edit" ? "active" : undefined}>{n}</th>
                    <td className={kind}>
                      {kind === "group" && <Expander $wide aria-label={`展开${name}`}>+</Expander>}
                      {name}
                    </td>
                    <td className={cell}>{value}</td>
                  </tr>
                ))}
              </tbody>
            </PropTable>
          </PropBody>
        </Panel>
      </MiddleColumn>

      <Splitter />

      <Canvas>
        <Plan />
        <ViewTools>
          {["orbit", "cube3d", "cubeTop"].map((n) => (
            <IconButton key={n} aria-label={n}><Glyph name={n} size={20} /></IconButton>
          ))}
          <Caret $color="#4b5568" />
          <IconButton aria-label="cube"><Glyph name="cube" size={20} /></IconButton>
          <Caret $color="#4b5568" />
          <IconButton aria-label="fit"><Glyph name="fit" size={20} /></IconButton>
          <IconButton aria-label="isolate"><Glyph name="isolate" size={20} /></IconButton>
          <hr />
          <IconButton aria-label="listEye"><Glyph name="listEye" size={20} /></IconButton>
        </ViewTools>
        <Prompt>
          <svg width="15" height="15" viewBox="0 0 15 15">
            <path d="M15 0L9 6V1M9 6h5M0 15l5-6v5M5 9H0" fill="none" stroke="#fff" />
          </svg>
          按鼠标左键指定第一个角点，或拾取构件图元
        </Prompt>
      </Canvas>

      <Splitter />

      <RightColumn>
        <Panel>
          <CloseStrip />
          <PanelTitle>显示设置</PanelTitle>
          <DisplayTabs>
            <DisplayTab $on>图元显示</DisplayTab>
            <DisplayTab>楼层显示</DisplayTab>
          </DisplayTabs>
          <DisplayBody>
            <DisplayTable>
              <colgroup>
                <col />
                <col width="63" />
                <col width="63" />
              </colgroup>
              <thead>
                <tr>
                  <th>图层构件</th>
                  <th>显示图元</th>
                  <th>显示名称</th>
                </tr>
              </thead>
              <tbody>
                {nodes.map((node, i) => (
                  <NodeRow key={i} node={node} last={nodes[i + 1] && nodes[i + 1][0] === 1} />
                ))}
              </tbody>
            </DisplayTable>
            <ScrollTrack $w={14} $top={14} $len={212} />
          </DisplayBody>
          <DisplayFoot>
            <ResetButton>恢复默认设置</ResetButton>
          </DisplayFoot>
        </Panel>
      </RightColumn>
    </Workspace>

    <StatusBar>
      <StatusRow>
        <StatusText $w={89}>{"层高：  3.5"}</StatusText>
        <StatusText $w={141}>{"标高：  -0.05~3.45"}</StatusText>
        <StatusText $w={110}>选中图元：2(20)</StatusText>
        <StatusText $w={111}>隐藏图元：0</StatusText>
        <StatusButton aria-label="正交"><Glyph name="corner" /></StatusButton>
        <StatusButton $wide $on aria-label="矩形选择"><Glyph name="sRect" /><Caret /></StatusButton>
        <StatusButton aria-label="交点"><Glyph name="sX" /></StatusButton>
        <StatusButton $wide aria-label="线"><Glyph name="sLine" /><Caret /></StatusButton>
        <StatusButton $wide aria-label="点"><Glyph name="sPlus" /><Caret /></StatusButton>
        <StatusButton aria-label="填充"><Glyph name="sFill" /></StatusButton>
        <StatusButton aria-label="弧"><Glyph name="sArc" /></StatusButton>
        <StatusLogo>
          <svg width="22" height="16" viewBox="0 0 22 16">
            <path d="M1 0v2M1 4v2M1 8v2" stroke="#aaa" strokeWidth="2" />
            <path d="M8 4l12-2l-2 12H9z" fill="none" stroke="#f4511e" strokeWidth="2" />
          </svg>
        </StatusLogo>
      </StatusRow>
    </StatusBar>
  </Page>
);

export default App;
